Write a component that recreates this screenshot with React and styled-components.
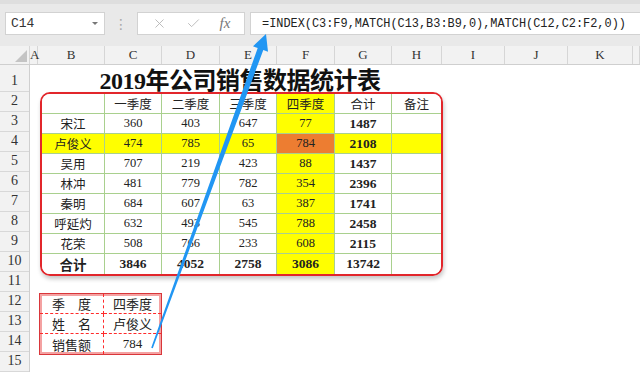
import React from "react";
import styled, {createGlobalStyle} from "styled-components";
import {X, Check} from "lucide-react";

const GRID_GREEN = "#a9d08e";
const RED = "#e2262b";

const GlobalStyle = createGlobalStyle`
  html, body {
    margin: 0;
    padding: 0;
    background: #fff;
  }
  body {
    font-family: "Liberation Serif", "Noto Sans CJK SC", serif;
    color: #222;
  }
`;

const Page = styled.div`
  position: relative;
  width: 640px;
  height: 374px;
  overflow: hidden;
  background: #fff;
`;

const Toolbar = styled.div`
  height: 46px;
  box-sizing: border-box;
  background: #e9e9e9;
  border-top: 4px solid #dedede;
  display: flex;
  align-items: flex-start;
  padding: 8px 0 0 5px;
`;

const Box = styled.div`
  height: 23px;
  box-sizing: border-box;
  background: #fff;
  border: 1px solid #d2d2d2;
  display: flex;
  align-items: center;
`;

const NameBox = styled(Box)`
  width: 100px;
  padding: 0 6px 0 5px;
  justify-content: space-between;
  font-family: "Liberation Mono", monospace;
  font-size: 13px;
  color: #333;
`;

const Caret = styled.span`
  width: 0;
  height: 0;
  border-left: 3px solid transparent;
  border-right: 3px solid transparent;
  border-top: 3px solid #777;
`;

const Grip = styled.div`
  width: 32px;
  height: 23px;
  display: flex;
  align-items: center;
  justify-content: center;
  color: #a8a8a8;
  font-size: 14px;
  font-family: "DejaVu Sans", sans-serif;
`;

const IconBox = styled(Box)`
  width: 108px;
  justify-content: space-around;
  padding: 0 4px;
  color: #b4b4b4;
`;

const Fx = styled.span`
  font-family: "Liberation Serif", serif;
  font-style: italic;
  font-size: 15px;
  color: #777;
`;

const FormulaBox = styled(Box)`
  flex: 1;
  margin-left: 5px;
  padding-left: 11px;
  border-right: none;
  font-family: "Liberation Mono", monospace;
  font-size: 11.9px;
  color: #222;
  white-space: nowrap;
`;

const ColHeaderRow = styled.div`
  display: grid;
  grid-template-columns: 30px 8px 67px 57px 58px 57px 58px 57px 50px 63px 63px 65px 7px;
  height: 19px;
  background: #f2f2f2;
  border-bottom: 1px solid #cfcfcf;
  box-sizing: border-box;
`;

const ColHead = styled.div`
  position: relative;
  border-right: 1px solid #d6d6d6;
  display: flex;
  align-items: center;
  justify-content: ${p => (p.$left ? "flex-start" : "center")};
  font-size: 13px;
  color: #333;
  overflow: visible;
  white-space: nowrap;
`;

const Corner = styled(ColHead)`
  &::after {
    content: "";
    position: absolute;
    right: 2px;
    bottom: 2px;
    border-left: 12px solid transparent;
    border-bottom: 12px solid #c4c4c4;
  }
`;

const SheetBody = styled.div`
  display: flex;
`;

const RowHeaders = styled.div`
  width: 30px;
  flex-shrink: 0;
  background: #f2f2f2;
  border-right: 1px solid #cfcfcf;
  box-sizing: border-box;
`;

const RowHead = styled.div`
  height: ${p => p.$h}px;
  box-sizing: border-box;
  border-bottom: 1px solid #d8d8d8;
  display: flex;
  align-items: flex-end;
  justify-content: center;
  padding-bottom: 2px;
  font-size: 14px;
  color: #333;
`;

const Content = styled.div`
  flex: 1;
  padding-left: 8px;
`;

const Title = styled.div`
  width: 404px;
  height: 27px;
  display: flex;
  align-items: center;
  justify-content: center;
  font-family: "Liberation Serif", "Noto Sans CJK SC", serif;
  font-weight: bold;
  font-size: 24px;
  letter-spacing: -0.5px;
  color: #111;
`;

const DataTable = styled.div`
  margin-left: 2px;
  width: 403px;
  box-sizing: border-box;
  border: 2px solid ${RED};
  border-radius: 10px;
  overflow: hidden;
  box-shadow: 1px 3px 4px rgba(0, 0, 0, 0.22);
  display: grid;
  grid-template-columns: 63px 57px 58px 57px 58px 57px 49px;
  grid-auto-rows: 20px;
`;

const Cell = styled.div`
  box-sizing: border-box;
  border-right: ${p => (p.$lastCol ? "none" : `1px solid ${GRID_GREEN}`)};
  border-bottom: ${p => (p.$lastRow ? "none" : `1px solid ${GRID_GREEN}`)};
  background: ${p => p.$bg || "#fff"};
  display: flex;
  align-items: center;
  justify-content: center;
  font-size: ${p => (p.$bold ? "13.5px" : "12.5px")};
  font-weight: ${p => (p.$bold ? "bold" : "normal")};
  color: #222;
`;

const LookupTable = styled.div`
  margin-top: 17px;
  margin-left: 1px;
  width: 123px;
  box-sizing: border-box;
  border: 1px solid #d9363a;
  box-shadow: inset 0 0 0 2px #f4a2a2;
  display: grid;
  grid-template-columns: 64px 57px;
  grid-auto-rows: 20px;
`;

const LookupCell = styled.div`
  box-sizing: border-box;
  border-right: ${p => (p.$lastCol ? "none" : "1px dashed #ff2a2a")};
  border-bottom: ${p => (p.$lastRow ? "none" : "1px dashed #ff2a2a")};
  display: flex;
  align-items: center;
  justify-content: center;
  font-size: 13px;
  color: #222;
`;

const Arrow = styled.svg`
  position: absolute;
  left: 0;
  top: 0;
  pointer-events: none;
`;

const COLS = ["A", "B", "C", "D", "E", "F", "G", "H", "I", "J", "K"];

const HEAD = ["", "一季度", "二季度", "三季度", "四季度", "合计", "备注"];

const ROWS = [
    ["宋江", 360, 403, 647, 77, 1487],
    ["卢俊义", 474, 785, 65, 784, 2108],
    ["吴用", 707, 219, 423, 88, 1437],
    ["林冲", 481, 779, 782, 354, 2396],
    ["秦明", 684, 607, 63, 387, 1741],
    ["呼延灼", 632, 493, 545, 788, 2458],
    ["花荣", 508, 766, 233, 608, 2115],
    ["合计", 3846, 4052, 2758, 3086, 13742],
];

const LOOKUP = [
    ["季　度", "四季度"],
    ["姓　名", "卢俊义"],
    ["销售额", "784"],
];

function cellBg(rowIdx, colIdx) {
    if (rowIdx === 1 && colIdx === 4) return "#ed7d31";
    if (colIdx === 4) return "#ffff00";
    if (rowIdx === 1) return "#ffff00";
    return null;
}

export default function App() {
    const rowNums = Array.from({length: 15}, (_, i) => i + 1);
    return (
        <Page>
            <GlobalStyle/>
            <Toolbar>
                <NameBox>C14<Caret/></NameBox>
                <Grip>⋮</Grip>
                <IconBox>
                    <X size={15} strokeWidth={1.4}/>
                    <Check size={15} strokeWidth={1.4}/>
                    <Fx>fx</Fx>
                </IconBox>
                <FormulaBox>=INDEX(C3:F9,MATCH(C13,B3:B9,0),MATCH(C12,C2:F2,0))</FormulaBox>
            </Toolbar>
            <ColHeaderRow>
                <Corner/>
                {COLS.map(c => <ColHead key={c} $left={c === "A"}>{c}</ColHead>)}
                <ColHead/>
            </ColHeaderRow>
            <SheetBody>
                <RowHeaders>
                    {rowNums.map(n => <RowHead key={n} $h={n === 1 ? 27 : 20}>{n}</RowHead>)}
                </RowHeaders>
                <Content>
                    <Title>2019年公司销售数据统计表</Title>
                    <DataTable>
                        {HEAD.map((h, i) => (
                            <Cell key={"h" + i} $bg={i === 4 ? "#ffff00" : null} $lastCol={i === 6}>{h}</Cell>
                        ))}
                        {ROWS.map((row, r) => {
                            const total = r === ROWS.length - 1;
                            return [...row, ""].map((v, c) => (
                                <Cell
                                    key={r + "-" + c}
                                    $bg={c > 0 ? cellBg(r, c) : (r === 1 ? "#ffff00" : null)}
                                    $bold={total || c === 5}
                                    $lastCol={c === 6}
                                    $lastRow={total}
                                >
                                    {v}
                                </Cell>
                            ));
                        })}
                    </DataTable>
                    <LookupTable>
                        {LOOKUP.map((row, r) => row.map((v, c) => (
                            <LookupCell key={r + "-" + c} $lastCol={c === 1} $lastRow={r === 2}>{v}</LookupCell>
                        )))}
                    </LookupTable>
                </Content>
            </SheetBody>
            <Arrow width="640" height="374" viewBox="0 0 640 374">
                <polygon
                    fill="#2196f3"
                    points="152.8,348.3 263.3,50 268,51.7 266,34 253,46.3 257.7,48 151.2,347.7"
                />
            </Arrow>
        </Page>
    );
}
